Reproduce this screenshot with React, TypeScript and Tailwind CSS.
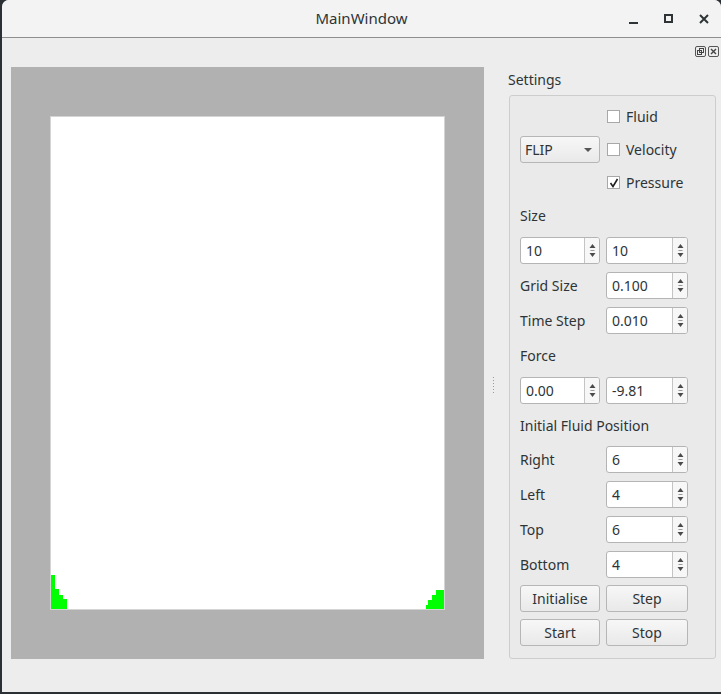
import React from 'react';

const font = "font-['Noto_Sans',_'DejaVu_Sans',_sans-serif]";

function Arrows() {
  return (
    <div className="flex w-[15px] flex-col items-center justify-center border-l border-[#c4c4c4] bg-[#f7f7f7]">
      <svg width="7" height="17" viewBox="0 0 7 17">
        <path d="M3.5 2 L6.5 6 L0.5 6 Z" fill="#4a4a4a" />
        <path d="M1.5 8.5 H5.5" stroke="#9a9a9a" strokeWidth="1" />
        <path d="M0.5 11 L6.5 11 L3.5 15 Z" fill="#4a4a4a" />
      </svg>
    </div>
  );
}

function Spin({ value, w }: { value: string; w: string }) {
  return (
    <div className={`flex h-[27px] ${w} overflow-hidden rounded-[3px] border border-[#b4b4b4] bg-white`}>
      <div className="flex flex-1 items-center pl-[5px] text-[14px] text-[#2e3436]">{value}</div>
      <Arrows />
    </div>
  );
}

function Btn({ label, w }: { label: string; w: string }) {
  return (
    <div className={`flex h-[27px] ${w} items-center justify-center rounded-[3px] border border-[#b6b6b6] bg-gradient-to-b from-[#f7f7f7] to-[#e9e9e9] text-[14px] text-[#2e3436]`}>
      {label}
    </div>
  );
}

function Check({ label, checked }: { label: string; checked?: boolean }) {
  return (
    <div className="flex h-[27px] items-center gap-[6px]">
      <div className="flex h-[13px] w-[13px] items-center justify-center border border-[#a8a8a8] bg-white">
        {checked && (
          <svg width="10" height="10" viewBox="0 0 10 10">
            <path d="M1.5 5 L4 8.5 L8.5 1" fill="none" stroke="#1e1e1e" strokeWidth="1.6" />
          </svg>
        )}
      </div>
      <span className="text-[14px] text-[#2e3436]">{label}</span>
    </div>
  );
}

function LabelRow({ label, value }: { label: string; value: string }) {
  return (
    <div className="flex h-[27px] items-center">
      <span className="w-[86px] text-[14px] text-[#2e3436]">{label}</span>
      <Spin value={value} w="w-[82px]" />
    </div>
  );
}

// fluid cells in the bottom corners of the simulation canvas (x relative to canvas edge)
const cells = [
  { x: 1, y: 575, w: 4 },
  { x: 5, y: 589, w: 4 },
  { x: 9, y: 595, w: 4 },
  { x: 13, y: 599, w: 4 },
  { x: 386, y: 590, w: 8 },
  { x: 382, y: 595, w: 4 },
  { x: 378, y: 600, w: 4 },
  { x: 376, y: 605, w: 2 },
];

export default function App() {
  return (
    <div className={`h-[694px] w-[721px] bg-[#2b3035] ${font}`}>
      <div className="ml-[2px] flex h-[692px] flex-col overflow-hidden rounded-t-[7px] bg-[#ededed]">
        {/* Title bar */}
        <div className="relative flex h-[38px] items-center justify-center border-b border-[#8e8e8e] bg-[#f3f3f3]">
          <span className="text-[15px] text-[#2e3436]">MainWindow</span>
          <div className="absolute right-0 top-0 flex h-full items-center">
            <div className="flex w-[35px] justify-center pt-[8px]">
              <div className="h-[2px] w-[9px] bg-[#2e3436]" />
            </div>
            <div className="flex w-[35px] justify-center">
              <div className="h-[9px] w-[9px] border-2 border-[#2e3436]" />
            </div>
            <div className="flex w-[35px] justify-center">
              <svg width="10" height="10" viewBox="0 0 10 10">
                <path d="M1 1 L9 9 M9 1 L1 9" stroke="#2e3436" strokeWidth="2" />
              </svg>
            </div>
          </div>
        </div>

        {/* Body */}
        <div className="flex flex-1">
          {/* Central widget */}
          <div className="pl-[9px] pt-[29px]">
            <div className="h-[592px] w-[473px] bg-[#b1b1b1] pl-[39px] pt-[49px]">
              <div className="relative h-[494px] w-[395px] border border-[#d4d4d4] bg-white">
                {cells.map((c) => (
                  <div
                    key={c.x}
                    className="absolute bottom-0 bg-[#00ff00]"
                    style={{ left: c.x - 1, width: c.w, height: 609 - c.y }}
                  />
                ))}
              </div>
            </div>
          </div>

          {/* Splitter */}
          <div className="flex w-[19px] flex-col items-center justify-center pt-[40px]">
            <div className="flex flex-col gap-[2px]">
              {[0, 1, 2, 3, 4, 5].map((i) => (
                <div key={i} className="h-[1px] w-[1px] bg-[#9a9a9a]" />
              ))}
            </div>
          </div>

          {/* Dock */}
          <div className="flex w-[218px] flex-col">
            <div className="flex h-[19px] items-end justify-end gap-[2px] pr-[2px]">
              <div className="flex h-[11px] w-[11px] items-center justify-center rounded-[2px] border border-[#555]">
                <svg width="7" height="7" viewBox="0 0 7 7">
                  <rect x="2.5" y="0.5" width="4" height="4" fill="none" stroke="#444" />
                  <rect x="0.5" y="2.5" width="4" height="4" fill="none" stroke="#444" />
                </svg>
              </div>
              <div className="flex h-[11px] w-[11px] items-center justify-center rounded-[2px] border border-[#555]">
                <svg width="7" height="7" viewBox="0 0 7 7">
                  <path d="M1 1 L6 6 M6 1 L1 6" stroke="#444" strokeWidth="1.4" />
                </svg>
              </div>
            </div>
            <div className="pl-[5px] pt-[13px] text-[14px] leading-[20px] text-[#2e3436]">Settings</div>
            <div className="ml-[6px] mt-[5px] h-[564px] w-[207px] rounded-[3px] border border-[#cdcdcd] bg-[#eaeaea] pl-[10px] pt-[7px]">
              {/* combo + checkboxes */}
              <div className="flex items-center">
                <div className="flex h-[27px] w-[80px] items-center justify-between rounded-[3px] border border-[#b6b6b6] bg-gradient-to-b from-[#f7f7f7] to-[#e9e9e9] pl-[4px] pr-[7px] text-[14px] text-[#2e3436]">
                  <span>FLIP</span>
                  <svg width="8" height="4" viewBox="0 0 8 4">
                    <path d="M0 0 H8 L4 4 Z" fill="#555" />
                  </svg>
                </div>
                <div className="ml-[7px] flex flex-col gap-[6px]">
                  <Check label="Fluid" />
                  <Check label="Velocity" />
                  <Check label="Pressure" checked />
                </div>
              </div>

              <div className="mt-[6px] flex flex-col gap-[8px]">
                <div className="flex h-[27px] items-center text-[14px] text-[#2e3436]">Size</div>
                <div className="flex gap-[6px]">
                  <Spin value="10" w="w-[80px]" />
                  <Spin value="10" w="w-[82px]" />
                </div>
                <LabelRow label="Grid Size" value="0.100" />
                <LabelRow label="Time Step" value="0.010" />
                <div className="flex h-[27px] items-center text-[14px] text-[#2e3436]">Force</div>
                <div className="flex gap-[6px]">
                  <Spin value="0.00" w="w-[80px]" />
                  <Spin value="-9.81" w="w-[82px]" />
                </div>
                <div className="flex h-[26px] items-center text-[14px] text-[#2e3436]">Initial Fluid Position</div>
                <LabelRow label="Right" value="6" />
                <LabelRow label="Left" value="4" />
                <LabelRow label="Top" value="6" />
                <LabelRow label="Bottom" value="4" />
              </div>
              <div className="mt-[7px] flex flex-col gap-[7px]">
                <div className="flex gap-[6px]">
                  <Btn label="Initialise" w="w-[80px]" />
                  <Btn label="Step" w="w-[82px]" />
                </div>
                <div className="flex gap-[6px]">
                  <Btn label="Start" w="w-[80px]" />
                  <Btn label="Stop" w="w-[82px]" />
                </div>
              </div>
            </div>
          </div>
        </div>
      </div>
    </div>
  );
}
